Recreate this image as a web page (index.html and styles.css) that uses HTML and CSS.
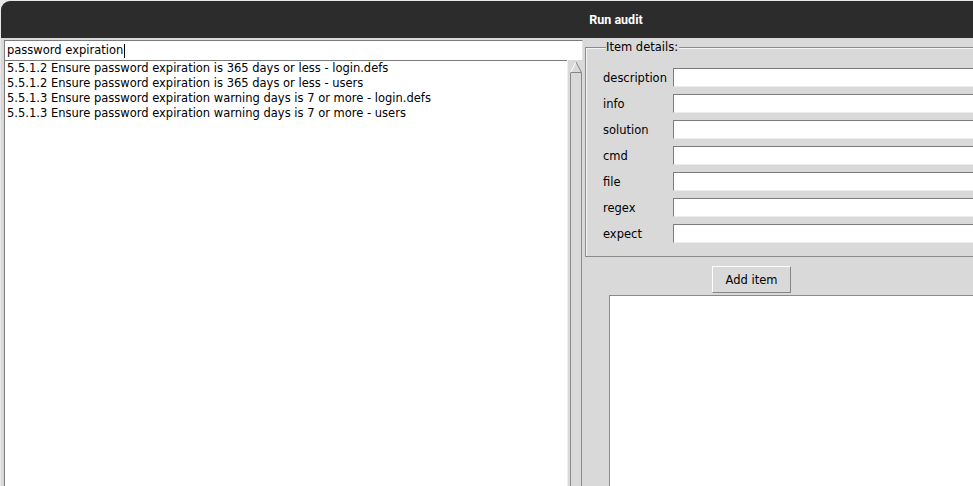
FILE: index.html
```html
<!DOCTYPE html>
<html>
<head>
<meta charset="utf-8">
<title>Run audit</title>
<link rel="stylesheet" href="styles.css">
</head>
<body>
<div class="window">
  <div class="titlebar">Run audit</div>
  <div class="content">
    <div class="left">
      <div class="search">password expiration<span class="caret"></span></div>
      <div class="listwrap">
        <div class="list">
          <div class="item">5.5.1.2 Ensure password expiration is 365 days or less - login.defs</div>
          <div class="item">5.5.1.2 Ensure password expiration is 365 days or less - users</div>
          <div class="item">5.5.1.3 Ensure password expiration warning days is 7 or more - login.defs</div>
          <div class="item">5.5.1.3 Ensure password expiration warning days is 7 or more - users</div>
        </div>
        <div class="scrollbar">
          <svg class="arrow" width="14" height="12" viewBox="0 0 14 12">
            <polygon points="7,1 12.5,11.5 1.5,11.5" fill="#d9d9d9"/>
            <line x1="7" y1="1" x2="1.5" y2="11.5" stroke="#ffffff" stroke-width="1"/>
            <line x1="7" y1="1" x2="12.5" y2="11.5" stroke="#858585" stroke-width="1"/>
            <line x1="1.5" y1="11.5" x2="12.5" y2="11.5" stroke="#858585" stroke-width="1"/>
          </svg>
          <div class="thumb"></div>
        </div>
      </div>
    </div>
    <div class="right">
      <fieldset class="details">
        <legend>Item details:</legend>
        <div class="grid">
          <span class="label">description</span><div class="field"></div>
          <span class="label">info</span><div class="field"></div>
          <span class="label">solution</span><div class="field"></div>
          <span class="label">cmd</span><div class="field"></div>
          <span class="label">file</span><div class="field"></div>
          <span class="label">regex</span><div class="field"></div>
          <span class="label">expect</span><div class="field"></div>
        </div>
      </fieldset>
      <div class="btnrow"><button class="btn">Add item</button></div>
      <div class="textbox"></div>
    </div>
  </div>
</div>
</body>
</html>
```

FILE: styles.css
```css
html, body {
  margin: 0;
  padding: 0;
}
body {
  width: 973px;
  height: 486px;
  overflow: hidden;
  background: #e8e8e8;
  font-family: "DejaVu Sans", sans-serif;
  font-size: 11.5px;
  color: #000;
}
.window {
  width: 1230px;
  height: 485px;
  margin: 1px 0 0 1px;
  background: #d9d9d9;
  border-radius: 9px 9px 0 0;
  overflow: hidden;
  display: flex;
  flex-direction: column;
}
.titlebar {
  height: 37px;
  flex: none;
  background: #2c2c2c;
  color: #ffffff;
  font-family: Roboto, "DejaVu Sans", sans-serif;
  font-weight: 700;
  font-size: 12.5px;
  display: flex;
  align-items: center;
  justify-content: center;
}
.content {
  flex: 1;
  display: flex;
  padding: 2px 0 0 3px;
  min-height: 0;
}
.left {
  width: 579px;
  flex: none;
  display: flex;
  flex-direction: column;
}
.search {
  height: 19px;
  line-height: 19px;
  background: #fff;
  border-top: 1px solid #7c7c7c;
  border-left: 1px solid #7c7c7c;
  border-right: 1px solid #e4e4e4;
  padding: 0 0 0 2px;
  box-sizing: content-box;
  white-space: nowrap;
  display: flex;
  align-items: center;
}
.caret {
  display: inline-block;
  width: 1px;
  height: 14px;
  background: #000;
  margin-left: 1px;
}
.listwrap {
  flex: 1;
  display: flex;
  min-height: 0;
}
.list {
  flex: 1;
  background: #fff;
  border-top: 1px solid #7c7c7c;
  border-left: 1px solid #7c7c7c;
  padding: 0 2px;
  line-height: 15px;
  white-space: nowrap;
  overflow: hidden;
}
.scrollbar {
  width: 15px;
  flex: none;
  background: #d9d9d9;
  border-left: 1px solid #efefef;
  display: flex;
  flex-direction: column;
  align-items: center;
  padding-top: 1px;
}
.arrow {
  flex: none;
  display: block;
}
.thumb {
  flex: 1;
  width: 10px;
  border-left: 1px solid #8a8a8a;
  border-right: 1px solid #8a8a8a;
  background: #d9d9d9;
}
.right {
  flex: 1;
  display: flex;
  flex-direction: column;
  min-width: 0;
}
.details {
  margin: 0 0 0 2px;
  padding: 14px 0 13px 17px;
  border: 1px solid #8b8b8b;
  box-shadow: inset 1px 1px 0 #f4f4f4;
  min-width: 0;
}
.details legend {
  padding: 0 1px 0 0;
  margin-left: 3px;
  background: #d9d9d9;
  line-height: 14px;
}
.grid {
  display: grid;
  grid-template-columns: 70px 1fr;
  row-gap: 7px;
  align-items: center;
}
.field {
  height: 17px;
  background: #fff;
  border-top: 1px solid #7c7c7c;
  border-left: 1px solid #7c7c7c;
  border-bottom: 1px solid #ececec;
}
.btnrow {
  padding: 9px 0 0 129px;
}
.btn {
  display: block;
  width: 79px;
  height: 27px;
  font-family: "DejaVu Sans", sans-serif;
  font-size: 11.5px;
  color: #000;
  background: #d9d9d9;
  border-top: 1px solid #ffffff;
  border-left: 1px solid #ffffff;
  border-right: 1px solid #858585;
  border-bottom: 1px solid #858585;
  padding: 0;
  margin: 0;
}
.textbox {
  flex: 1;
  margin: 2px 0 0 26px;
  background: #fff;
  border-top: 1px solid #8a8a8a;
  border-left: 1px solid #8a8a8a;
}
```
